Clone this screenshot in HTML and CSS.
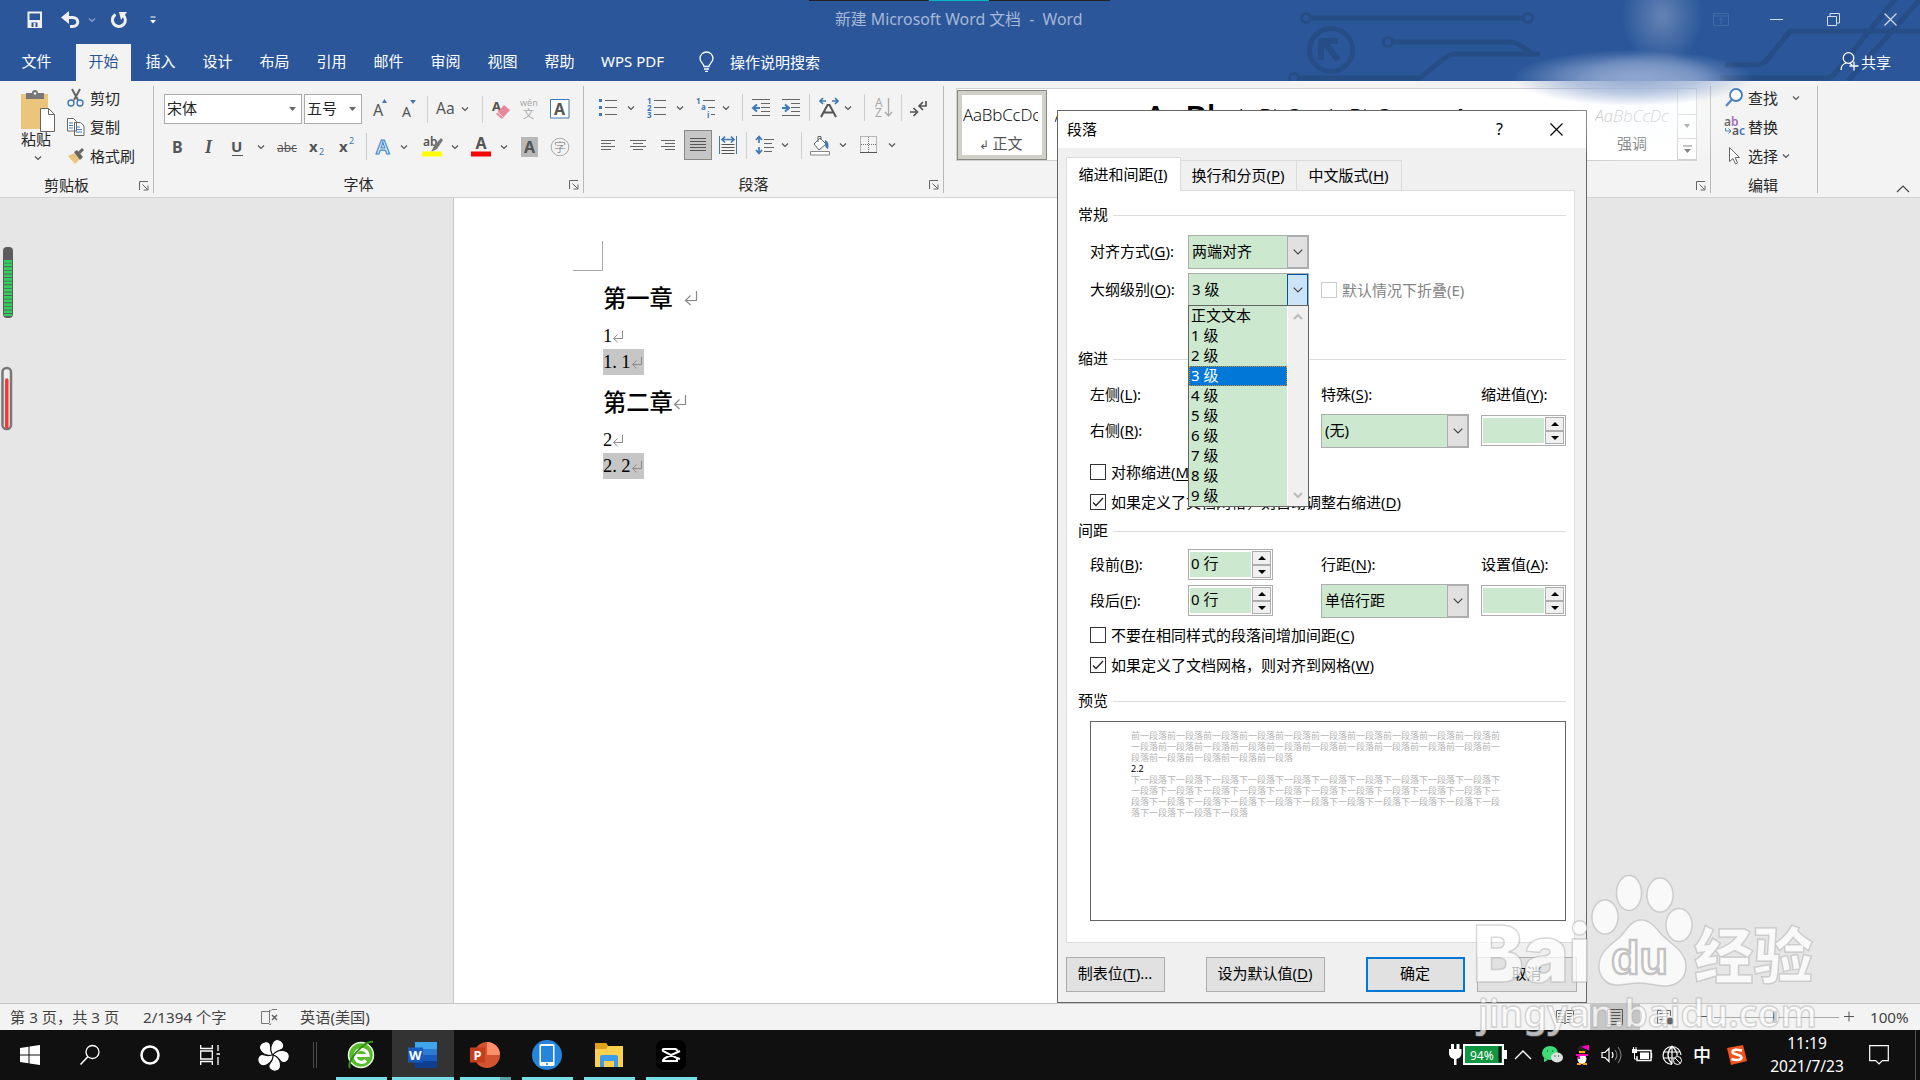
FILE: index.html
```html
<!DOCTYPE html>
<html lang="zh-CN">
<head>
<meta charset="utf-8">
<title>新建 Microsoft Word 文档 - Word</title>
<link rel="stylesheet" href="styles.css">
</head>
<body>
<svg class="defs" width="0" height="0">
  <symbol id="chev" viewBox="0 0 8 8"><path d="M1 2.5l3 3 3-3" fill="none" stroke="currentColor" stroke-width="1.2"/></symbol>
  <symbol id="launch" viewBox="0 0 10 10"><path d="M.5 9V.5H9M3.500 3.500l5 5M9 4.500V9H4.500" fill="none" stroke="#666"/></symbol>
  <symbol id="cchev" viewBox="0 0 10 6"><path d="M.7.7l4.300 4.300L9.300.7" fill="none" stroke="currentColor" stroke-width="1.200"/></symbol>
  <symbol id="ret" viewBox="0 0 14 16"><path d="M12.500 1v9.500H2M6.500 5.500L1.500 10.500l5 4.500" fill="none" stroke="#888" stroke-width="1.200"/></symbol>
</svg>
<div class="screen">

<header class="top">
  <svg class="circuit" width="640" height="81" viewBox="1280 0 640 81">
    <g fill="none" stroke="#264d85" stroke-width="5">
      <circle cx="1306" cy="18" r="4.500" stroke-width="3"/><path d="M1311 18h212"/><circle cx="1528" cy="18" r="4.500" stroke-width="3"/>
      <circle cx="1331" cy="50" r="21.500"/><path d="M1338 60l-13-17M1321 60V41h17" stroke-width="6"/>
      <circle cx="1388" cy="42" r="4.500" stroke-width="3"/><path d="M1393 42h118q8 1 20 11"/>
      <circle cx="1294" cy="78" r="4.500" stroke-width="3"/><path d="M1299 78h121l20-16q8-8 16-8h84"/>
      <path d="M1725 65h30q8 0 12-5l23-29h130M1720 78h106q6 0 10-6l60-74M1848 81l75-85"/>
    </g>
  </svg>
  <div class="tabs-strip"></div>
  <div class="titlebar">
    <div class="qat">
      <svg width="16" height="18"><path d="M1.500 1.500h12.500v14.500h-12.500z" fill="none" stroke="#f0f0f0" stroke-width="2"/><path d="M1 9h14v7H1z" fill="#f0f0f0"/><path d="M4.500 11.500h6V16h-6z" fill="#2b579a"/><path d="M6.500 12h2v4h-2z" fill="#f0f0f0"/></svg>
      <svg width="19" height="18"><path d="M2 6.500h9.500c7 0 7 9 0 9H9" fill="none" stroke="#f0f0f0" stroke-width="3"/><path d="M8 0L0 6.500 8 13z" fill="#f0f0f0"/></svg>
      <svg class="dim" width="8" height="8"><use href="#chev"/></svg>
      <svg width="18" height="18"><path d="M5.500 3.500A6.500 6.500 0 1 0 13 4" fill="none" stroke="#f0f0f0" stroke-width="3"/><path d="M9 1h8L11 9z" fill="#f0f0f0"/></svg>
      <svg width="8" height="10"><path d="M1.500 2h5" stroke="#fff"/><path d="M1 5h6L4 8.500z" fill="#fff"/></svg>
    </div>
    <div class="title">新建 Microsoft Word 文档&nbsp; - &nbsp;Word</div>
    <div class="winbtns">
      <svg width="16" height="13"><path d="M.5.5h15v12H.5zM.5 3h15M8 11V5M5.500 7.500L8 5l2.500 2.500" fill="none" stroke="#4069a8"/></svg>
      <svg width="13" height="13"><path d="M0 6.500h13" stroke="#d3dced"/></svg>
      <svg width="13" height="13"><path d="M.5 3.500h9v9h-9zM3 3V.5h9.500v9.500H10" fill="none" stroke="#d3dced"/></svg>
      <svg width="13" height="13"><path d="M.5.5l12 12M12.500.5l-12 12" stroke="#d3dced" stroke-width="1.200"/></svg>
    </div>
  </div>
  <nav class="menu">
    <span class="tab file">文件</span><span class="tab on">开始</span><span class="tab">插入</span><span class="tab">设计</span><span class="tab">布局</span><span class="tab">引用</span><span class="tab">邮件</span><span class="tab">审阅</span><span class="tab">视图</span><span class="tab">帮助</span><span class="tab wps">WPS PDF</span>
    <svg class="bulb" width="16" height="20"><path d="M5 14.500c0-3-4-4-4-8a6.500 6.500 0 0 1 13 0c0 4-4 5-4 8zM5 17h5M6 19.300h3" fill="none" stroke="#fff" stroke-width="1.300"/></svg>
    <span>操作说明搜索</span>
    <span class="share"><svg width="19" height="20"><circle cx="8.500" cy="6" r="5.300" fill="none" stroke="#fff" stroke-width="1.200"/><path d="M1 18c0-4 2-6 5-7M10 11.500l2 1.500M14 9.500v9M9.500 14h9" fill="none" stroke="#fff" stroke-width="1.300"/></svg>共享</span>
  </nav>
</header>

<section class="ribbon">
  <div class="group clip">
    <div class="body">
      <div class="paste">
        <svg width="36" height="44"><path d="M1 4h27v35H1z" fill="#ecc57d"/><path d="M6 3h6a3 3 0 0 1 6 0h6v6H6z" fill="#777"/><circle cx="15" cy="3.500" r="1.300" fill="#f3f3f3"/><path d="M20.500 18.500h8l6 6v17h-14z" fill="#fff" stroke="#666"/><path d="M28.500 18.500v6h6" fill="none" stroke="#666"/></svg>
        <span>粘贴</span><svg width="8" height="8"><use href="#chev"/></svg>
      </div>
      <div class="clip-cmds">
        <span><svg width="18" height="18"><path d="M5 0l6 11M13 0L7 11" stroke="#666" stroke-width="2"/><circle cx="4" cy="14" r="3" fill="none" stroke="#3f78b5" stroke-width="1.400"/><circle cx="13" cy="14" r="3" fill="none" stroke="#3f78b5" stroke-width="1.400"/></svg>剪切</span>
        <span><svg width="18" height="18"><path d="M.5.500h6l3 3V13h-9zM7.500 4.500h6l3.500 3.500v9.500H7.500z" fill="#fff" stroke="#666"/><path d="M2 5h4M2 7.500h4M2 10h4M9 9h4M9 11.500h6M9 14h6" stroke="#3f78b5"/></svg>复制</span>
        <span><svg width="18" height="18"><path d="M1 9l7-3 5 6-5 5z" fill="#ecc57d"/><path d="M7 5l3-2 6 7-3 3z" fill="#666"/><path d="M12 6l4-4" stroke="#666" stroke-width="3"/></svg>格式刷</span>
      </div>
    </div>
    <div class="label"><span>剪贴板</span><svg width="10" height="10"><use href="#launch"/></svg></div>
  </div>

  <div class="group font">
    <div class="irow f1">
      <div class="box name"><span>宋体</span><svg width="8" height="5"><path d="M0 0h7L3.500 4z" fill="#666"/></svg></div>
      <div class="box size"><span>五号</span><svg width="8" height="5"><path d="M0 0h7L3.500 4z" fill="#666"/></svg></div>
      <svg width="20" height="24"><text x="2" y="19" class="g16">A</text><path d="M11 6l2.500-4L16 6z" fill="#3f78b5"/></svg>
      <svg width="20" height="24"><text x="2" y="20" class="g14">A</text><path d="M10 3h6l-3 4z" fill="#3f78b5"/></svg>
      <i class="sep"></i><span class="aa">Aa</span><svg width="8" height="8"><use href="#chev"/></svg><i class="sep"></i>
      <svg width="22" height="24"><text x="1" y="14" class="g13b">A</text><path d="M13 8l6 5-8 9-6-5z" fill="#e8899b"/><path d="M5 14l7 6" stroke="#f3f3f3"/></svg>
      <svg width="20" height="24"><text x="1" y="9" class="wen">wén</text><text x="4" y="21" class="wenc">文</text></svg>
      <svg width="20" height="22"><path d="M.5 1.500h18.500v18.500H.5z" fill="#fff" stroke="#3f78b5"/><text x="4" y="17" class="g16b">A</text></svg>
    </div>
    <div class="irow f2">
      <svg width="20" height="22"><text x="5" y="17" class="g16b">B</text></svg>
      <svg width="20" height="22"><text x="7" y="17" class="g16i">I</text></svg>
      <svg width="20" height="22"><text x="4" y="16" class="g15b">U</text><path d="M5 19.500h11" stroke="#555"/></svg>
      <svg width="8" height="8"><use href="#chev"/></svg>
      <svg width="22" height="22"><text x="0" y="16" class="g13">abc</text><path d="M0 12.500h20" stroke="#555"/></svg>
      <svg width="20" height="22"><text x="2" y="16" class="g15b">x</text><text x="12" y="19" class="b9">2</text></svg>
      <svg width="20" height="22"><text x="2" y="16" class="g15b">x</text><text x="12" y="8" class="b9">2</text></svg>
      <i class="sep"></i>
      <svg width="20" height="24"><text x="2" y="19" class="outl">A</text></svg><svg width="8" height="8"><use href="#chev"/></svg>
      <svg width="22" height="24"><text x="1" y="11" class="g11b">ab</text><path d="M19 3l-7 8-3 6 6-3 6-9z" fill="#777"/><path d="M0 16.500h20v5H0z" fill="#ff0"/></svg><svg width="8" height="8"><use href="#chev"/></svg>
      <svg width="20" height="24"><text x="4.500" y="14" class="g16b">A</text><path d="M0 16.500h20v5H0z" fill="red"/></svg><svg width="8" height="8"><use href="#chev"/></svg>
      <svg width="20" height="22"><path d="M1 1h17v20H1z" fill="#b8b8b8"/><text x="4" y="17" class="g16b">A</text></svg>
      <svg width="20" height="22"><circle cx="10" cy="11" r="8.800" fill="none" stroke="#aaa"/><text x="4" y="15.500" class="ring">字</text></svg>
    </div>
    <div class="label"><span>字体</span><svg width="10" height="10"><use href="#launch"/></svg></div>
  </div>

  <div class="group para">
    <div class="irow p1">
      <svg width="20" height="20"><path d="M7 2.500h12M7 9.500h12M7 16.500h12" stroke="#666"/><path d="M1 1h3v3H1zM1 8h3v3H1zM1 15h3v3H1z" fill="#3f78b5"/></svg><svg width="8" height="8"><use href="#chev"/></svg>
      <svg width="20" height="22"><path d="M7 3.500h12M7 10.500h12M7 17.500h12" stroke="#666"/><text x="0" y="7" class="num">1</text><text x="0" y="14" class="num">2</text><text x="0" y="21" class="num">3</text></svg><svg width="8" height="8"><use href="#chev"/></svg>
      <svg width="20" height="22"><path d="M7 3.500h12M12 10.500h7M15 17.500h4" stroke="#666"/><text x="0" y="7" class="num">1</text><text x="5" y="13" class="num">a</text><text x="11" y="21" class="num">i</text></svg><svg width="8" height="8"><use href="#chev"/></svg><i class="sep"></i>
      <svg width="20" height="20"><path d="M1 1.500h18M10 5.500h9M10 9.500h9M10 13.500h9M1 17.500h18" stroke="#666"/><path d="M9 10H3M6 6.500L2 10l4 3.500" fill="none" stroke="#3f78b5" stroke-width="2"/></svg>
      <svg width="20" height="20"><path d="M1 1.500h18M10 5.500h9M10 9.500h9M10 13.500h9M1 17.500h18" stroke="#666"/><path d="M1 10h6M4 6.500L8 10l-4 3.500" fill="none" stroke="#3f78b5" stroke-width="2"/></svg><i class="sep"></i>
      <svg width="20" height="22"><path d="M2 20l6.500-12h2L17 20M5 15.500h9" fill="none" stroke="#555" stroke-width="2"/><path d="M1 4h6M13 4h6M4 1L1 4l3 3M16 1l3 3-3 3" fill="none" stroke="#3f78b5" stroke-width="1.700"/></svg><svg width="8" height="8"><use href="#chev"/></svg><i class="sep"></i>
      <svg width="20" height="22"><text x="1" y="10" class="az">A</text><text x="1" y="20" class="az">Z</text><path d="M14.500 1v18M11 15l3.500 4 3.500-4" fill="none" stroke="#aaa" stroke-width="1.300"/></svg><i class="sep"></i>
      <svg width="20" height="20"><path d="M17 3v5h-6M14 4l-4 4 4 4M1 14h6M4.500 10l4 4-4 4" fill="none" stroke="#555" stroke-width="1.700"/></svg>
    </div>
    <div class="irow p2">
      <svg width="20" height="20"><path d="M3 5.500h14M3 8.500h10M3 11.500h14M3 14.500h10" stroke="#666"/></svg>
      <svg width="20" height="20"><path d="M2 5.500h16M5 8.500h10M2 11.500h16M5 14.500h10" stroke="#666"/></svg>
      <svg width="20" height="20"><path d="M3 5.500h14M7 8.500h10M3 11.500h14M7 14.500h10" stroke="#666"/></svg>
      <span class="pressed"><svg width="18" height="18"><path d="M1 2.500h16M1 5.500h16M1 8.500h16M1 11.500h16M1 14.500h16" stroke="#555"/></svg></span>
      <svg width="20" height="20"><path d="M1.500 1v18M18.500 1v18" stroke="#3f78b5"/><path d="M4 4.500h12M7 1.500l-3 3 3 3M13 1.500l3 3-3 3" fill="none" stroke="#3f78b5" stroke-width="1.700"/><path d="M3.500 9.500h13M3.500 12.500h13M3.500 15.500h13M3.500 18.500h13" stroke="#555"/></svg><i class="sep"></i>
      <svg width="20" height="20"><path d="M9 4.500h10M9 8.500h8M9 12.500h10M9 16.500h8" stroke="#666"/><path d="M4 2v6M1 5l3-3.500L7 5M4 12v6M1 15l3 3.500L7 15" fill="none" stroke="#3f78b5" stroke-width="1.700"/></svg><svg width="8" height="8"><use href="#chev"/></svg><i class="sep"></i>
      <svg width="21" height="21"><path d="M4 9l6-6 6 6-7 6z" fill="#fff" stroke="#666"/><path d="M8 7V1.500h3V5" fill="none" stroke="#666"/><path d="M15 5q5 2 3 9-3-1-3-5z" fill="#3f78b5"/><path d="M.5 16.500h19v3.500H.5z" fill="#fff" stroke="#888"/></svg><svg width="8" height="8"><use href="#chev"/></svg>
      <svg width="20" height="20"><path d="M1.500 1.500h16v16h-16zM9.500 2v16M2 9.500h16" fill="none" stroke="#777" stroke-dasharray="1 1"/><path d="M1 17.500h17" stroke="#555"/></svg><svg width="8" height="8"><use href="#chev"/></svg>
    </div>
    <div class="label"><span>段落</span><svg width="10" height="10"><use href="#launch"/></svg></div>
  </div>

  <div class="group styles">
    <div class="gallery">
      <div class="st sel"><b class="s">AaBbCcDc</b><em><small>↲</small> 正文</em></div>
      <div class="st"><b class="s">AaBbCcDc</b></div>
      <div class="st"><b class="s h1">AaBl</b></div>
      <div class="st"><b class="s h2">AaBbC</b></div>
      <div class="st"><b class="s h2">AaBbC</b></div>
      <div class="st"><b class="s h2 bold">AaBbC</b></div>
      <div class="st"><b class="s gray">AaBbCcDc</b></div>
      <div class="st"><b class="s gray it">AaBbCcDc</b><em>强调</em></div>
      <div class="gscroll"><i></i><i><svg width="8" height="5"><path d="M1 0h6L4 4z" fill="#777"/></svg></i><i><svg width="9" height="9"><path d="M0 1h9" stroke="#666"/><path d="M1 4h7L4.500 8z" fill="#666"/></svg></i></div>
    </div>
    <div class="label"><svg width="10" height="10"><use href="#launch"/></svg></div>
  </div>

  <div class="group edit">
    <span><svg width="20" height="20"><circle cx="12" cy="7" r="6" fill="#fff" stroke="#3f78b5" stroke-width="1.800"/><path d="M8 11.500l-6 6.500" stroke="#3f78b5" stroke-width="2.400"/></svg>查找<svg class="far" width="8" height="8"><use href="#chev"/></svg></span>
    <span><svg width="20" height="20"><text x="0" y="9" class="g11b">a<tspan class="violet">b</tspan></text><text x="8" y="18" class="g11b">a<tspan class="blue">c</tspan></text><path d="M1.500 11v3h5M4.500 11.500L7 14l-2.500 2.500" fill="none" stroke="#3f78b5"/></svg>替换</span>
    <span><svg width="20" height="20"><path d="M5.500 1.500v14l3.500-3 2.500 5.500 2-1-2.300-5.500H15.500z" fill="#fff" stroke="#666"/></svg>选择<svg class="near" width="8" height="8"><use href="#chev"/></svg></span>
    <div class="elabel">编辑</div>
  </div>
  <svg class="collapse" width="14" height="8"><path d="M1 7l6-6 6 6" fill="none" stroke="#444" stroke-width="1.200"/></svg>
</section>

<main class="doc">
  <div class="gutter">
    <svg class="widget" width="16" height="190">
      <rect x="3" y="1" width="10" height="71" rx="4" fill="#5c5c5c"/><path d="M8 14v56" stroke="#2fd15f" stroke-width="8" stroke-dasharray="2.700 .9"/>
      <rect x="2.500" y="122" width="8.500" height="61" rx="4" fill="#eee" stroke="#777" stroke-width="2.500"/><path d="M6.800 134v47" stroke="#f93636" stroke-width="3.500" stroke-linecap="round"/>
    </svg>
  </div>
  <article class="page">
    <svg class="corner" width="30" height="30"><path d="M29.500 0v29.500H0" fill="none" stroke="#a8a8a8"/></svg>
    <h2>第一章 <svg width="14" height="16"><use href="#ret"/></svg></h2>
    <p><span>1<svg width="12" height="13"><use href="#ret"/></svg></span></p>
    <p><span class="hl">1<i>.</i>1<svg width="12" height="13"><use href="#ret"/></svg></span></p>
    <h2>第二章<svg width="14" height="16"><use href="#ret"/></svg></h2>
    <p><span>2<svg width="12" height="13"><use href="#ret"/></svg></span></p>
    <p><span class="hl">2<i>.</i>2<svg width="12" height="13"><use href="#ret"/></svg></span></p>
  </article>
</main>

<footer class="status">
  <span>第 3 页，共 3 页</span><span>2/1394 个字</span>
  <svg width="18" height="17"><path d="M9 2.500H1.500v12H9l1 1.500 1-1.500M9.500 14V1M10 2.500l2-2h5" fill="none" stroke="#777"/><path d="M12 6l5 5M17 6l-5 5" stroke="#666" stroke-width="1.500"/></svg>
  <span>英语(美国)</span>
  <div class="views">
    <i><svg width="18" height="16"><path d="M.5 1.500h7L9 3l1.500-1.500h7v12h-7L9 15l-1.500-1.500h-7zM9 3v12M2 4.500h5M2 7.500h5M2 10.500h5M11 4.500h5M11 7.500h5M11 10.500h5" fill="none" stroke="#666"/></svg></i>
    <i class="cur"><svg width="18" height="16"><path d="M1.500.5h15v15h-15zM3.500 3.500h11M3.500 6.500h11M3.500 9.500h11M3.500 12.500h11" fill="none" stroke="#555"/></svg></i>
    <i><svg width="18" height="16"><path d="M14.500 7V1.500h-13v13H10M3.500 4.500h9M3.500 7.500h7M3.500 10.500h5" fill="none" stroke="#666"/><circle cx="14" cy="12" r="3.500" fill="#666"/></svg></i>
  </div>
  <svg class="zoombar" width="160" height="12"><path d="M0 5.500h10M147 5.500h10M152 .5v10" stroke="#555"/><path d="M17 6.500h125" stroke="#aaa"/><path d="M76 0h4v12h-4z" fill="#555"/></svg>
  <span class="pct">100%</span>
</footer>

<div class="taskbar">
  <div class="t w60"><svg width="20" height="20"><path d="M0 3l8.500-1.200V9.500H0zM9.500 1.600L20 0v9.500H9.500zM0 10.500h8.500v7.700L0 17zM9.500 10.500H20V20L9.500 18.400z" fill="#fff"/></svg></div>
  <div class="t w60"><svg width="20" height="20"><circle cx="12.500" cy="7" r="6.500" fill="none" stroke="#fff" stroke-width="1.300"/><path d="M8 11.500L.5 19.500" stroke="#fff" stroke-width="1.500"/></svg></div>
  <div class="t w60"><svg width="20" height="20"><circle cx="10" cy="10" r="8.500" fill="none" stroke="#fff" stroke-width="2.500"/></svg></div>
  <div class="t w60"><svg width="20" height="20"><path d="M.7 0v3.500h11.600V0M.7 6h11.600v8H.7zM.7 20v-3.500h11.600V20M18 0v6M18 12v8M16.500 9h3.500" fill="none" stroke="#fff" stroke-width="1.300"/></svg></div>
  <div class="t w66"><svg width="28" height="28"><g fill="#fff" stroke="#101010" stroke-width="1.100"><path id="petal" d="M14.500 14C5 17-2 8 1.500 3.500 5-1 12 0 11.500 6c0 4 1 6 3 8z"/><use href="#petal" transform="rotate(72 14 14)"/><use href="#petal" transform="rotate(144 14 14)"/><use href="#petal" transform="rotate(216 14 14)"/><use href="#petal" transform="rotate(288 14 14)"/></g></svg></div>
  <svg class="tsep" width="5" height="26"><path d="M.5 0v26M3.500 0v26" stroke="#4a4a4a"/></svg>
  <div class="apps">
    <div class="t app"><svg width="28" height="28"><circle cx="14" cy="14" r="12.500" fill="#58bb2b" stroke="#e8ffe0" stroke-width="1.500"/><path d="M8 14.500h13a6.500 6.500 0 1 0-2 5" fill="none" stroke="#fff" stroke-width="3.200"/><path d="M3 27C-1 20 18-1 26 1" fill="none" stroke="#36941b" stroke-width="2"/></svg></div>
    <div class="t app act"><svg width="30" height="28"><path d="M7 1h22v7H7z" fill="#41a5ee"/><path d="M7 8h22v6H7z" fill="#2b7cd3"/><path d="M7 14h22v6H7z" fill="#185abd"/><path d="M7 20h22v7H7z" fill="#103f91"/><path d="M0 6.500h15v15H0z" fill="#185abd"/><text x="1" y="18.500" class="logo">W</text></svg></div>
    <div class="t app two"><svg width="30" height="28"><circle cx="17" cy="14" r="13" fill="#d35230"/><path d="M17 1a13 13 0 0 1 13 13H17z" fill="#ff8f6b"/><path d="M0 6.500h15v15H0z" fill="#c43e1c"/><text x="3.500" y="19" class="logo">P</text></svg></div>
    <div class="t app"><svg width="30" height="30"><circle cx="15" cy="15" r="15" fill="#2585dc"/><rect x="7.500" y="4" width="15" height="22" rx="1.500" fill="#fff"/><path d="M9 6h12v16H9z" fill="#2585dc"/><circle cx="15" cy="24" r="1" fill="#2585dc"/></svg></div>
    <div class="t app"><svg width="28" height="24"><path d="M0 0h11l2 3h15v21H0z" fill="#ffcf4e"/><path d="M0 0h11l2 3-2 3H0z" fill="#e0a11b"/><path d="M5 24V14q0-2 2-2h14q2 0 2 2v10h-4v-6h-10v6z" fill="#3d9be9"/></svg></div>
    <div class="t app"><svg width="30" height="30"><rect width="30" height="30" rx="7" fill="#000"/><path d="M24 11l-13 6q-4 2-4 4h14v-3L7 11q-1-2 1-2h11q2 0 2 2M21 18l3 1" fill="none" stroke="#fff" stroke-width="2"/></svg></div>
  </div>
  <div class="tray">
    <svg width="60" height="24"><path d="M3.500 1v6M9 1v6" stroke="#fff" stroke-width="3"/><path d="M0 6h12.500v4q0 5-5 6v6h-2.500v-6q-5-1-5-6z" fill="#fff"/><path d="M15 2h39v19H15z" fill="#109541" stroke="#fff" stroke-width="2"/><path d="M49.500 3.500h3v16h-3z" fill="#101010"/><path d="M55 7h3v9h-3z" fill="#fff"/><text x="21" y="16.500" class="bat">94%</text></svg>
    <svg width="18" height="10"><path d="M1 9l8-8 8 8" fill="none" stroke="#fff" stroke-width="1.400"/></svg>
    <svg width="21" height="18"><ellipse cx="8" cy="7" rx="8" ry="7" fill="#3ddc77"/><path d="M2 12v4l4-2z" fill="#3ddc77"/><ellipse cx="15" cy="11.500" rx="6" ry="5" fill="#e0e0e0"/><path d="M5 5h1M10 5h1M12.500 10h1M16 10h1" stroke="#1b6c3a" stroke-width="1.500"/></svg>
    <svg width="16" height="20"><ellipse cx="7" cy="12" rx="6.500" ry="7" fill="#000"/><ellipse cx="7" cy="14" rx="4.500" ry="5" fill="#fff"/><circle cx="7" cy="5" r="4.500" fill="#222"/><path d="M4 7h6" stroke="#ffb300" stroke-width="2"/><path d="M1 10h12M9 2l4-1v3zM4 10v4" fill="#f0b" stroke="#f0b" stroke-width="2"/><path d="M2 19h4M8 19h4" stroke="#ffa000" stroke-width="2"/></svg>
    <svg width="22" height="18"><path d="M1 6.500h3l4-4v13l-4-4H1z" fill="none" stroke="#fff" stroke-width="1.200"/><path d="M11 6q2 3 0 6" fill="none" stroke="#fff" stroke-width="1.200"/><path d="M14 4q4 5 0 10M17 1q6 8 0 16" fill="none" stroke="#777" stroke-width="1.200"/></svg>
    <svg width="21" height="16"><path d="M5 3.500h14v10H5V9M19.500 6v5" fill="none" stroke="#fff" stroke-width="1.400"/><path d="M8 5.500h9v6.500H8zM0 2h5v4H0z" fill="#fff"/><path d="M1.500 0v2M4 0v2M2.500 6v6H5" fill="none" stroke="#fff"/></svg>
    <svg width="21" height="20"><path d="M19 10A9 9 0 1 0 10 19.500M10 1q-8 9 0 18M10 1q6 6 5 10M1 7h17M1 13h11M10 1v18" fill="none" stroke="#fff" stroke-width="1.200"/><circle cx="15.500" cy="15.500" r="4" fill="none" stroke="#fff"/><path d="M13 13l5 5" stroke="#fff"/></svg>
    <span class="ime">中</span>
    <svg width="20" height="20"><path d="M0 3l16-3 4 16-16 4z" fill="#f2511b"/><path d="M15 5.500Q6 3.500 5.500 7c0 3 9 2 9 5.500 0 3-6 3-10 1.500" fill="none" stroke="#fff" stroke-width="2.600"/></svg>
    <div class="clock"><span>11:19</span><span>2021/7/23</span></div>
    <svg width="20" height="20"><path d="M.7.7h18.600v15h-6L10 19l-3.300-3.300h-6z" fill="none" stroke="#fff" stroke-width="1.200"/></svg>
    <i class="desk"></i>
  </div>
</div>

<div class="dialog">
  <div class="dtitle"><span>段落</span><b>?</b><svg width="13" height="13"><path d="M.5.500l12 12M12.500.5l-12 12" stroke="#000" stroke-width="1.200"/></svg></div>
  <div class="dtabs"><span class="on">缩进和间距(<u>I</u>)</span><span>换行和分页(<u>P</u>)</span><span>中文版式(<u>H</u>)</span></div>
  <div class="panel">
    <div class="sec"><span>常规</span></div>
    <div class="row r-align"><label>对齐方式(<u>G</u>):</label><div class="combo w121"><span>两端对齐</span><b><svg width="10" height="6"><use href="#cchev"/></svg></b></div></div>
    <div class="row r-level"><label>大纲级别(<u>O</u>):</label>
      <div class="combo w121 open"><span>3 级</span><b><svg width="10" height="6"><use href="#cchev"/></svg></b>
        <div class="drop"><ul><li>正文文本</li><li>1 级</li><li>2 级</li><li class="on">3 级</li><li>4 级</li><li>5 级</li><li>6 级</li><li>7 级</li><li>8 级</li><li>9 级</li></ul>
        <div class="dscroll"><svg width="10" height="7"><path d="M1 6l4-4 4 4" fill="none" stroke="#bbb" stroke-width="2"/></svg><svg width="10" height="7"><path d="M1 1l4 4 4-4" fill="none" stroke="#bbb" stroke-width="2"/></svg></div></div>
      </div>
      <div class="check wide off"><i></i><span>默认情况下折叠(E)</span></div></div>
    <div class="sec s-indent"><span>缩进</span></div>
    <div class="row r-left"><label>左侧(<u>L</u>):</label><i></i><label>特殊(<u>S</u>):</label><label>缩进值(<u>Y</u>):</label></div>
    <div class="row r-right"><label>右侧(<u>R</u>):</label><i></i><div class="combo w148"><span>(无)</span><b><svg width="10" height="6"><use href="#cchev"/></svg></b></div><div class="spin"><span></span><b></b><b></b></div></div>
    <div class="check c1"><i></i><span>对称缩进(<u>M</u>)</span></div>
    <div class="check c2"><i><svg width="14" height="14"><path d="M2 7.500l3 3L12 3" fill="none" stroke="#222" stroke-width="1.300"/></svg></i><span>如果定义了文档网格，则自动调整右缩进(<u>D</u>)</span></div>
    <div class="sec s-space"><span>间距</span></div>
    <div class="row r-before"><label>段前(<u>B</u>):</label><div class="spin"><span>0 行</span><b></b><b></b></div><label>行距(<u>N</u>):</label><label>设置值(<u>A</u>):</label></div>
    <div class="row r-after"><label>段后(<u>F</u>):</label><div class="spin"><span>0 行</span><b></b><b></b></div><div class="combo w148"><span>单倍行距</span><b><svg width="10" height="6"><use href="#cchev"/></svg></b></div><div class="spin"><span></span><b></b><b></b></div></div>
    <div class="check c3"><i></i><span>不要在相同样式的段落间增加间距(<u>C</u>)</span></div>
    <div class="check c2"><i><svg width="14" height="14"><path d="M2 7.500l3 3L12 3" fill="none" stroke="#222" stroke-width="1.300"/></svg></i><span>如果定义了文档网格，则对齐到网格(<u>W</u>)</span></div>
    <div class="sec s-prev"><span>预览</span></div>
    <div class="preview">
      <p>前一段落前一段落前一段落前一段落前一段落前一段落前一段落前一段落前一段落前一段落前一段落前一段落前一段落前一段落前一段落前一段落前一段落前一段落前一段落前一段落前一段落前一段落前一段落前一段落前一段落</p>
      <p class="now">2.2</p>
      <p>下一段落下一段落下一段落下一段落下一段落下一段落下一段落下一段落下一段落下一段落下一段落下一段落下一段落下一段落下一段落下一段落下一段落下一段落下一段落下一段落下一段落下一段落下一段落下一段落下一段落下一段落下一段落下一段落下一段落下一段落下一段落下一段落下一段落下一段落</p>
    </div>
  </div>
  <div class="dbtns"><span class="b1">制表位(<u>T</u>)...</span><span class="b2">设为默认值(<u>D</u>)</span><span class="b3">确定</span><span class="b4">取消</span></div>
</div>

<div class="smudge"></div>
<svg class="watermark" width="360" height="180" viewBox="1465 865 360 180">
  <g fill="#fff" fill-opacity=".74" stroke="#9a9a9a" stroke-opacity=".4" stroke-width="1.500">
    <text x="1473" y="982" class="wm1" textLength="118" lengthAdjust="spacingAndGlyphs">Bai</text>
    <ellipse cx="1605" cy="917" rx="13" ry="17"/><ellipse cx="1629" cy="893" rx="12.500" ry="17.500"/><ellipse cx="1660" cy="895" rx="13" ry="17"/><ellipse cx="1679" cy="925" rx="13" ry="16.500"/>
    <path d="M1641 920c9 0 15 8 20 14 7 8 25 17 25 32 0 13-9 20-22 20-9 0-14-3-24-3s-15 2-23 2c-11 0-18-8-18-19 0-14 12-21 21-29 6-6 11-17 21-17z"/>
    <text x="1611" y="974" class="wm2" textLength="57" lengthAdjust="spacingAndGlyphs">du</text>
    <text x="1694" y="978" class="wm3" textLength="119" lengthAdjust="spacingAndGlyphs">经验</text>
    <text x="1478" y="1027" class="wm4" textLength="339" lengthAdjust="spacingAndGlyphs">jingyan.baidu.com</text>
  </g>
</svg>
</div>
</body>
</html>
```
FILE: styles.css
```css
* { box-sizing: border-box; }
body { margin: 0; font: 15px/20px "Noto Sans", "Noto Sans CJK SC", sans-serif; color: #262626; }
svg { display: block; flex: none; overflow: visible; }
i { font-style: normal; }
u { text-underline-offset: 2px; text-decoration-thickness: 1px; }
.defs { position: absolute; }
.screen { position: relative; width: 1920px; height: 1080px; overflow: hidden; display: flex; flex-direction: column; white-space: nowrap; }

/* Title bar and tabs */
.top { position: relative; height: 81px; flex: none; background: #2b579a; color: #fff; }
.circuit { position: absolute; right: 0; top: 0; overflow: hidden; }
.tabs-strip { position: absolute; left: 809px; top: 0; width: 301px; height: 1px; background: linear-gradient(90deg, #222 120px, #00b7c3 120px, #00b7c3 180px, #222 180px); }
.titlebar { position: relative; height: 44px; display: grid; grid-template-columns: 835px 1fr 222px; }
.qat { display: grid; grid-template-columns: 34px 27px 22px 39px 20px; align-items: center; padding: 0 0 4px 27px; }
.dim { color: #8ca5cc; }
.title { padding-top: 9px; font-size: 15.85px; color: #a6b8d6; }
.winbtns { display: grid; grid-template-columns: 57px 57px 57px 20px; padding: 13px 0 0 15px; }
.menu { position: relative; display: flex; height: 37px; align-items: center; padding-bottom: 2px; }
.tab { width: 57px; height: 37px; line-height: 35px; text-align: center; margin-bottom: -2px; }
.tab.file { width: 76px; padding-right: 3px; }
.tab.on { background: #f3f3f3; color: #2b579a; width: 55px; margin-right: 1px; }
.tab.wps { width: 97px; padding-left: 13px; text-align: left; }
.bulb { margin: 0 15px 0 14px; }
.share { margin-left: auto; margin-right: 29px; display: flex; align-items: center; gap: 2px; }

/* Ribbon */
.ribbon { height: 117px; flex: none; background: #f3f3f3; border-bottom: 1px solid #d2d2d2; display: flex; padding-top: 5px; color: #262626; }
.ribbon > .group { height: 107px; border-right: 1px solid #b8b8b8; padding-top: 8px; display: flex; flex-direction: column; gap: 9px; }
.clip { width: 154px; }
.font { width: 430px; }
.para { width: 360px; }
.styles { width: 767px; }
.edit { width: 107px; }
.group .label { height: 20px; margin-top: 4px; display: flex; justify-content: center; align-items: center; position: relative; margin-right: 20px; }
.label svg { position: absolute; right: -16px; top: 6px; }
.group .irow + .label { margin-top: 5px; }
.clip .body { height: 68px; display: flex; }
.paste { width: 67px; padding-left: 9px; display: flex; flex-direction: column; align-items: center; margin-top: -4px; }
.paste span { margin-top: -5px; margin-left: -4px; }
.paste svg + span + svg { margin-top: 5px; }
.clip-cmds { margin-top: -6px; display: flex; flex-direction: column; gap: 9px; }
.clip-cmds span { display: flex; gap: 5px; align-items: center; height: 20px; }
.group svg { color: #555; }
.irow { display: grid; height: 30px; align-items: center; justify-items: start; }
.f1 { grid-template-columns: 140px 67px 29px 27px 7px 27px 21px 9px 28px 31px 21px; padding-left: 10px; }
.f2 { grid-template-columns: 31px 29px 30px 20px 30px 30px 29px 8px 26px 22px 29px 20px 29px 20px 30px 20px; padding-left: 13px; }
.p1 { grid-template-columns: 29px 20px 29px 20px 26px 20px 9px 30px 28px 10px 25px 20px 10px 27px 8px 20px; padding-left: 14px; }
.p2 { grid-template-columns: 30px 30px 26px 34px 28px 9px 26px 20px 9px 29px 20px 29px 8px; padding-left: 14px; }
.sep { width: 1px; height: 27px; background: #cfcfcf; }
.box { height: 30px; border: 1px solid #ababab; background: #fff; padding: 0 4px 0 2px; display: flex; justify-content: space-between; align-items: center; }
.box span { padding-bottom: 2px; }
.name { width: 138px; }
.size { width: 58px; }
.aa { color: #555; font-size: 15.5px; padding: 0 0 3px 2px; }
.group svg text { fill: #555; font-family: "Noto Sans", "Noto Sans CJK SC", sans-serif; }
.g16 { font-size: 16px; } .g14 { font-size: 14px; } .g13 { font-size: 12px; }
.g13b { font-size: 13px; font-weight: 700; } .g15b { font-size: 15px; font-weight: 700; }
.g16b { font-size: 16px; font-weight: 700; } .g16i { font-size: 18px; font-weight: 700; font-style: italic; }
.group svg .g16i { font-family: "Liberation Serif", serif; }
.g11b { font-size: 12px; font-weight: 600; }
.group svg .violet { fill: #9a5fb5; }
.group svg .blue { fill: #3f78b5; }
.group svg .b9 { font-size: 9px; fill: #3f78b5; }
.group svg .num { font-size: 8px; font-weight: 700; fill: #3f78b5; }
.group svg .wen { font-size: 9px; fill: #aaa; } .group svg .wenc { font-size: 11px; fill: #aaa; }
.group svg .ring { font-size: 12px; fill: #999; }
.group svg .az { font-size: 12px; fill: #aaa; }
.group svg .outl { font-size: 20px; font-weight: 600; fill: #fff; stroke: #3f86d0; stroke-width: 1.2; }
.pressed { width: 28px; height: 30px; background: #c6c6c6; border: 1px solid #888; display: grid; place-items: center; }
.gallery { height: 75px; width: 741px; margin: -6px 0 0 12px; border: 1px solid #d0d0d0; background: #fff; display: flex; }
.st { width: 90px; flex: none; padding: 16px 8px 0; text-align: center; overflow: hidden; display: flex; flex-direction: column; gap: 6px; align-items: center; }
.st.sel { border: 1px solid #888880; box-shadow: inset 0 0 0 4px #d0d0c8; margin-top: 1px; height: 70px; padding: 13px 9px 0 6px; gap: 7px; }
.s { font: 300 17px/22px "Open Sans", "Noto Sans", sans-serif; letter-spacing: -.2px; width: 75px; flex: none; overflow: hidden; text-align: left; color: #000; }
.h1 { font-size: 33px; font-weight: 600; line-height: 24px; overflow: visible; clip-path: inset(-10px 0 -10px 0); }
.h2 { font-size: 22px; }
.bold { font-weight: 700; }
.gray { color: #aaa; }
.it { font-style: italic; }
.st em { font-style: normal; color: #555; }
.st small { font-size: 12px; }
.gscroll { width: 19px; margin-left: auto; display: grid; grid-template-rows: 26px 24px 1fr; border-left: 1px solid #ccc; }
.gscroll i { display: grid; place-items: center; border-bottom: 1px solid #ccc; }
.styles .label { margin-right: 20px; margin-top: 5px; }
.edit { padding-left: 13px; }
.ribbon > .edit { padding-top: 2px; }
.edit > span { display: flex; align-items: center; gap: 4px; height: 20px; }
.far { margin-left: 10px; }
.elabel { padding-left: 24px; }
.collapse { margin: 99px 0 0 78px; }

/* Document */
.doc { height: 805px; flex: none; background: #e6e6e6; display: flex; }
.gutter { width: 453px; padding-top: 48px; }
.page { width: 1133px; background: #fff; border-left: 1px solid #c6c6c6; padding: 43px 0 0 119px; color: #000; }
.corner { margin-bottom: 6px; }
.page h2 { font-size: 23.300px; font-weight: 500; line-height: 34px; height: 41px; margin: 0; display: flex; align-items: center; padding-left: 30px; }
.page h2:first-of-type { gap: 11px; }
.page p { margin: 0; height: 26px; padding-left: 30px; font: 18.500px/28px "Liberation Serif", serif; display: flex; }
.page p span { display: flex; align-items: center; padding-right: 1px; height: 26px; }
.page p span i { width: 9px; }
.page h2 + p { margin-top: 5px; margin-bottom: 0; }
.page p + h2 { margin-top: 6px; }
.hl { background: #c6c6c6; }

/* Status bar */
.status { height: 27px; flex: none; background: #f3f3f3; border-top: 1px solid #c6c6c6; display: flex; align-items: center; padding-left: 10px; color: #444; }
.status > span { font-size: 15.200px; }
.status > span:nth-child(1) { width: 133px; }
.status > span:nth-child(2) { width: 117px; }
.status > svg:nth-child(3) { margin-right: 22px; }
.views { margin-left: auto; display: flex; height: 26px; }
.views i { width: 50px; display: grid; place-items: center; }
.views .cur { background: #c6c6c6; }
.zoombar { margin-left: 7px; }
.status > .pct { width: 50px; margin: 0 0 0 13px; }

/* Taskbar */
.taskbar { height: 50px; flex: none; background: #101010; display: flex; align-items: center; color: #fff; }
.t { display: grid; place-items: center; height: 50px; }
.w60 { width: 60px; }
.w66 { width: 66px; }
.tsep { margin-left: 7px; }
.apps { display: flex; margin-left: 12px; }
.app { width: 62px; background: linear-gradient(#76e0e4, #76e0e4) 50% 100% / 51px 3px no-repeat; }
.app.act { background: linear-gradient(#76e0e4, #76e0e4) 50% 100% / 100% 3px no-repeat #333; }
.app.two { background: linear-gradient(90deg, #76e0e4 40px, #5b9ea3 40px) 50% 100% / 51px 3px no-repeat; }
.logo { font: 700 13px "Noto Sans", sans-serif; fill: #fff; }
.tray { margin-left: auto; display: grid; grid-template-columns: 65px 28px 33px 26px 31px 30px 29px 36px 39px 83px 42px 29px; align-items: center; height: 50px; }
.bat { font: 12px "Noto Sans", sans-serif; fill: #fff; }
.ime { font-size: 18px; font-weight: 500; padding-left: 2px; }
.clock { display: flex; flex-direction: column; gap: 3px; text-align: center; line-height: 20px; padding-bottom: 1px; font-size: 15.500px; }
.tray > .clock { width: 82px; }
.tray > .clock + svg { margin-left: 20px; }
.desk { width: 1px; height: 50px; background: #555; justify-self: end; margin-right: 4px; }

/* Paragraph dialog */
.dialog { position: absolute; left: 1057px; top: 110px; width: 530px; height: 893px; border: 1px solid #666; background: #f0f0f0; color: #000; }
.dtitle { height: 37px; background: #fff; display: flex; align-items: center; padding: 0 23px 0 9px; }
.dtitle span { padding-bottom: 2px; }
.dtitle b { margin-left: auto; margin-right: 47px; padding-bottom: 2px; font-weight: 400; font-size: 16px; }
.dtabs { display: flex; align-items: flex-end; padding: 10px 0 0 8px; height: 42px; }
.dtabs span { height: 30px; line-height: 29px; border: 1px solid #dcdcdc; border-bottom: 0; border-left: 0; width: 116px; text-align: center; padding-right: 1px; }
.dtabs span:last-child { width: 105px; }
.dtabs .on { height: 34px; line-height: 32px; width: 115px; background: #fff; border-left: 1px solid #dcdcdc; position: relative; margin-bottom: -1px; z-index: 1; }
.panel { margin-left: 8px; width: 509px; height: 753px; background: #fff; border: 1px solid #dcdcdc; padding: 13px 8px 0 11px; }
.sec { height: 22px; line-height: 20px; display: flex; align-items: center; gap: 5px; }
.sec span { padding-bottom: 2px; }
.sec::after { content: ""; height: 1px; flex: 1; background: #dcdcdc; }
.row { display: grid; grid-template-columns: 98px 133px 160px 85px; height: 34px; align-items: center; padding-left: 12px; }
.row label { padding-bottom: 2px; }
.r-align { margin-top: 9px; }
.r-level { margin-top: 4px; }
.s-indent { margin-top: 41px; }
.r-left { margin-top: 8px; }
.r-right { margin-top: 2px; }
.combo { height: 34px; border: 1px solid #adadad; background: #cce8cf; display: flex; justify-content: space-between; padding-left: 3px; line-height: 30px; position: relative; }
.w121 { width: 121px; }
.w148 { width: 148px; }
.combo b { width: 21px; background: #e1e1e1; border: 1px solid #adadad; display: grid; place-items: center; color: #444; }
.open > b { background: #cce4f7; border-color: #005499; }
.drop { position: absolute; left: -1px; top: 31px; width: 121px; height: 202px; border: 1px solid #646464; background: #cce8cf; display: flex; z-index: 2; }
.drop ul { list-style: none; margin: 0; padding: 0; width: 98px; line-height: 19px; }
.drop li { padding-left: 2px; height: 20px; }
.drop .on { background: #0078d7; color: #fff; outline: 1px dotted #d98a26; outline-offset: -1px; }
.dscroll { flex: 1; background: #f0f0f0; border-left: 1px solid #fff; display: flex; flex-direction: column; justify-content: space-between; align-items: center; padding: 7px 0; }
.check { display: flex; align-items: center; gap: 5px; height: 20px; padding-left: 12px; }
.row .check { padding-left: 0; }
.row .check span { padding-bottom: 1px; }
.check i { width: 16px; height: 16px; border: 1px solid #333; background: #fff; }
.off { color: #838383; }
.off i { border-color: #ccc; }
.c1 { margin-top: 14px; }
.c2 { margin-top: 10px; }
.c3 { margin-top: 7px; }
.s-space { margin-top: 8px; }
.r-before { margin-top: 6px; }
.r-after { margin-top: 2px; }
.s-prev { margin-top: 15px; }
.spin { width: 85px; height: 31px; border: 1px solid #adadad; background: #fff; padding: 1px; display: grid; grid-template: 14px 13px / 61px 20px; row-gap: 0; margin-top: -1px; }
.spin span { grid-row: 1 / 3; background: #cce8cf; margin: 1px 0; line-height: 22px; padding-left: 1px; }
.spin b { margin-left: 1px; width: 19px; border: 1px solid #adadad; background: #f0f0f0; display: grid; place-items: center; }
.spin b::before { content: ""; border: 4px solid transparent; border-top: 0; border-bottom-color: #000; }
.spin b:last-child::before { transform: rotate(180deg); }
.preview { margin: 9px 0 0 12px; width: 476px; height: 200px; border: 1px solid #646464; padding: 8px 0 0 40px; font-size: 9px; line-height: 11px; color: #b4b4b4; }
.preview p { margin: 0; width: 370px; white-space: normal; word-break: break-all; }
.preview .now { color: #000; }
.dbtns { display: flex; padding: 14px 0 0 8px; }
.dbtns span { height: 35px; line-height: 31px; border: 1px solid #adadad; background: #e1e1e1; text-align: center; padding-right: 1px; }
.b1 { width: 99px; margin-right: 41px; }
.b2 { width: 119px; margin-right: 41px; }
.dbtns .b3 { width: 99px; margin-right: 12px; border: 2px solid #0078d7; line-height: 29px; }
.b4 { width: 100px; }

/* Soft highlight on the account area */
.smudge { position: absolute; left: 1500px; top: 0; width: 260px; height: 170px; background: radial-gradient(ellipse 40px 50px at 162px 16px, rgba(130,155,195,.65), transparent), radial-gradient(ellipse 120px 28px at 133px 78px, rgba(143,167,208,.9) 10%, rgba(143,167,208,.6) 55%, transparent), radial-gradient(ellipse 95px 60px at 150px 112px, rgba(252,253,255,.55) 30%, transparent); }
.watermark { position: absolute; left: 1465px; top: 865px; }
.wm1 { font: 900 79px Inter, "Liberation Sans", sans-serif; }
.wm2 { font: 700 47px "Liberation Sans", sans-serif; stroke: #aaa; stroke-width: 2.5px; stroke-opacity: .7; }
.wm3 { font: 900 60px "Noto Sans CJK SC", sans-serif; }
.wm4 { font: 600 38px "Noto Sans", sans-serif; }
```
